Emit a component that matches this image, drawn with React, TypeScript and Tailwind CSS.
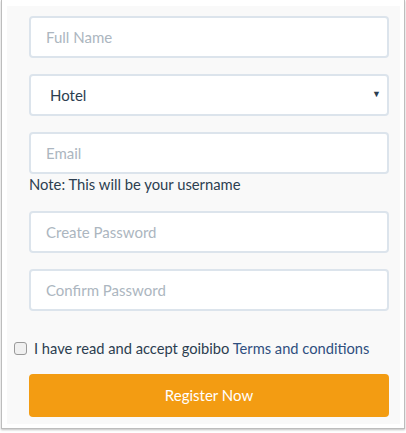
import React from 'react';

const inputCls =
  'block w-full h-[42px] rounded-[4px] border-2 border-[#dce4ec] bg-white px-[15px] text-[15px] text-[#2c3e50] placeholder:text-[#acb6c0] outline-none';

export default function App() {
  return (
    <div
      className="w-[406px] h-[433px] bg-white"
      style={{ fontFamily: 'Lato, "Open Sans", sans-serif' }}
    >
      <div className="ml-[1px] w-[404px] h-[429px] border-x border-b border-[#bdbdbd] bg-white px-[5px] pt-[6px] shadow-[0_1px_2px_rgba(0,0,0,0.25)]">
        <div className="h-[418px] w-[393px] bg-[#f9f9f9] pt-[10px]">
          <div className="pl-[22px] pr-[11px]">
            <input className={inputCls} placeholder="Full Name" />
            <div className="relative mt-[16px]">
              <div className="flex h-[42px] items-center rounded-[4px] border-2 border-[#dce4ec] bg-white pl-[19px] text-[15px] text-[#2c3e50]">
                Hotel
              </div>
              <span className="absolute right-[8px] top-[13px] text-[9px] text-[#2c3e50]">▼</span>
            </div>
            <input className={`${inputCls} mt-[16px]`} placeholder="Email" />
            <p className="text-[14.8px] leading-[21px] text-[#2c3e50]">Note: This will be your username</p>
            <input className={`${inputCls} mt-[16px]`} placeholder="Create Password" />
            <input className={`${inputCls} mt-[16px]`} placeholder="Confirm Password" />
          </div>
          <label className="mt-[27px] flex items-center pl-[7px] text-[14.7px] leading-[21px] text-[#2c3e50]">
            <span className="mr-[7px] inline-block h-[13px] w-[13px] rounded-[3px] border border-[#9a9a9a] bg-[#f0f0f0]" />
            <span>
              I have read and accept goibibo{' '}
              <a className="text-[#2f4f7f]" href="#">Terms and conditions</a>
            </span>
          </label>
          <div className="pl-[22px] pr-[11px]">
            <button className="mt-[15px] h-[43px] w-full rounded-[4px] bg-[#f39c12] text-[15px] text-white">
              Register Now
            </button>
          </div>
        </div>
      </div>
    </div>
  );
}
